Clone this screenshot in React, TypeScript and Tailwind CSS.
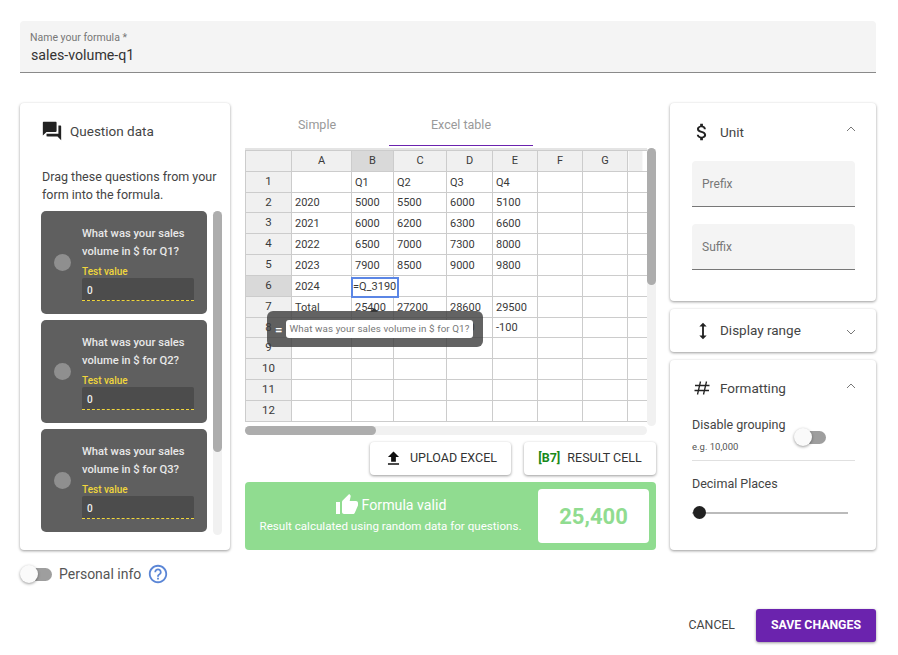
import { MdAttachMoney, MdFileUpload, MdHeight, MdHelpOutline, MdQuestionAnswer, MdThumbUp } from "react-icons/md";

const columns = ["A", "B", "C", "D", "E", "F", "G", ""];

// cada fila con su altura, la tabla original no tiene todas iguales
const rows = [
  { n: 1, h: "h-[21px]", cells: ["", "Q1", "Q2", "Q3", "Q4"] },
  { n: 2, h: "h-[20px]", cells: ["2020", "5000", "5500", "6000", "5100"] },
  { n: 3, h: "h-[21px]", cells: ["2021", "6000", "6200", "6300", "6600"] },
  { n: 4, h: "h-[21px]", cells: ["2022", "6500", "7000", "7300", "8000"] },
  { n: 5, h: "h-[21px]", cells: ["2023", "7900", "8500", "9000", "9800"] },
  { n: 6, h: "h-[21px]", cells: ["2024", "", "", "", ""] },
  { n: 7, h: "h-[21px]", cells: ["Total", "25400", "27200", "28600", "29500"] },
  { n: 8, h: "h-[20px]", cells: ["", "", "", "1800", "-100"] },
  { n: 9, h: "h-[21px]", cells: ["", "", "", "", ""] },
  { n: 10, h: "h-[21px]", cells: ["", "", "", "", ""] },
  { n: 11, h: "h-[21px]", cells: ["", "", "", "", ""] },
  { n: 12, h: "h-[21px]", cells: ["", "", "", "", ""] },
];

const Toggle = () => (
  <div className="relative flex h-[18px] w-8 items-center">
    <div className="ml-[8px] h-[13px] w-6 rounded-full bg-[#9e9e9e]" />
    <div className="absolute left-0 top-0 h-[18px] w-[18px] rounded-full bg-[#fafafa] shadow-[0_1px_3px_rgba(0,0,0,0.4)]" />
  </div>
);

const Chevron = ({ up }: { up: boolean }) => (
  <svg width="12" height="8" viewBox="0 0 12 8" fill="none" stroke="#777" strokeWidth="1">
    <path d={up ? "M2 6 L6 2 L10 6" : "M2 2 L6 6 L10 2"} />
  </svg>
);

const QuestionCard = ({ q }: { q: string }) => (
  <div className="flex h-[103px] w-[166px] shrink-0 items-start rounded-[5px] bg-[#5f5f5f] pl-[13px]">
    <div className="mt-[43px] h-[17px] w-[17px] shrink-0 rounded-full bg-[#8f8f8f]" />
    <div className="ml-[11px] w-[112px] pt-[14px]">
      <p className="text-[11.2px] font-medium leading-[18px] text-[#e8e8e8]">What was your sales volume in $ for {q}?</p>
      <p className="mt-[4px] text-[10px] font-medium leading-[13px] text-[#f0d63c]">Test value</p>
      <div className="flex h-[23px] items-center rounded-t-[2px] border-b border-dashed border-[#f0d63c] bg-[#4c4c4c] pl-[5px] pt-[2px] text-[10px] font-medium text-[#f0f0f0]">0</div>
    </div>
  </div>
);

const Sheet = () => (
  <div className="relative mt-[2px] flex h-[287px] w-[411px] flex-wrap content-start">
    <div className="h-[278px] w-[402px] overflow-hidden border-t-2 border-[#e4e4e4]">
      <table className="w-[420px] table-fixed border-collapse text-[11px] text-[#3a3a3a]">
        <colgroup>
          <col className="w-[46px]" />
          <col className="w-[60px]" />
          <col className="w-[42px]" />
          <col className="w-[53px]" />
          <col className="w-[46px]" />
          <col className="w-[45px]" />
          <col className="w-[45px]" />
          <col className="w-[45px]" />
          <col className="w-[38px]" />
        </colgroup>
        <thead>
          <tr className="h-[21px]">
            <th className="border border-[#cccccc] bg-[#f0f0f0]" />
            {columns.map((c) => (
              <th
                key={c}
                className={`border border-[#cccccc] text-center font-normal ${
                  c === "B" ? "bg-[#d9d9d9]" : c === "" ? "bg-[linear-gradient(90deg,#f0f0f0_14px,#ffffff_14px)]" : "bg-[#f0f0f0]"
                }`}
              >
                {c}
              </th>
            ))}
          </tr>
        </thead>
        <tbody>
          {rows.map((r) => (
            <tr key={r.n} className={r.h}>
              <td className={`border border-[#cccccc] p-0 text-center text-[11.5px] ${r.n === 6 ? "bg-[#d9d9d9]" : "bg-[#f0f0f0]"}`}>{r.n}</td>
              {r.cells.map((v, i) => (
                <td key={i} className="whitespace-nowrap border border-[#cccccc] px-[3px] py-0 leading-none">
                  {r.n === 6 && i === 1 ? (
                    <span className="relative block">
                      <span className="absolute left-[-4px] top-[-9px] h-[21px] w-[48px] border-2 border-[#5b86e5] bg-white leading-[15px]">=Q_3190</span>
                    </span>
                  ) : (
                    v
                  )}
                </td>
              ))}
              <td className="border border-[#cccccc]" />
              <td className="border border-[#cccccc]" />
              <td className="border border-[#cccccc]" />
            </tr>
          ))}
        </tbody>
      </table>
    </div>
    {/* barra vertical */}
    <div className="h-[278px] w-[9px] rounded-full bg-[#f1f1f1]">
      <div className="h-[137px] w-[9px] rounded-full bg-[#adadad]" />
    </div>
    <div className="h-[9px] w-[402px] rounded-full bg-[#f1f1f1]">
      <div className="h-[9px] w-[131px] rounded-full bg-[#adadad]" />
    </div>
    {/* pregunta arrastrada y punta del cursor */}
    <svg className="absolute left-[125px] top-[160px]" width="8" height="4" viewBox="0 0 8 4" fill="#333">
      <path d="M4 0 L8 4 H0 Z" />
    </svg>
    <div className="absolute left-[22px] top-[163px] flex h-[36px] w-[216px] items-center rounded-[6px] bg-[#3c3c3c]/80 pl-[8px]">
      <span className="w-[11px] text-[13px] font-bold leading-none text-white">=</span>
      <span className="flex h-[18px] w-[187px] items-center justify-center rounded-[3px] bg-white text-[9.8px] tracking-[0.1px] text-[#777]">What was your sales volume in $ for Q1?</span>
    </div>
  </div>
);

export default function App() {
  return (
    <div className="h-[655px] w-[898px] overflow-hidden bg-white pl-5 pr-[22px] pt-[21px] font-['Roboto',sans-serif]">
      <div className="flex h-[52px] flex-col rounded-t-[4px] border-b border-[#8a8a8a] bg-[#f4f4f4] pl-[10px] pt-[10px]">
        <span className="text-[10.5px] leading-[13px] text-[#777]">Name your formula *</span>
        <span className="ml-[1px] mt-[2px] text-[14.2px] leading-[18px] text-[#333]">sales-volume-q1</span>
      </div>

      <div className="mt-[30px] flex h-[447px]">
        {/* Question data */}
        <div className="flex w-[210px] shrink-0 flex-col rounded-[4px] bg-white pl-[21px] shadow-[0_1px_3px_rgba(0,0,0,0.4)]">
          <div className="mt-[17px] flex h-[22px] items-center gap-[7px] text-[13.5px] text-[#444]">
            <MdQuestionAnswer className="text-[#222]" size={22} />
            Question data
          </div>
          <p className="ml-[1px] mt-[26px] text-[12.5px] leading-[18px] text-[#444]">Drag these questions from your form into the formula.</p>
          <div className="mt-[7px] flex gap-[6px]">
            <div className="flex flex-col gap-[6px]">
              <QuestionCard q="Q1" />
              <QuestionCard q="Q2" />
              <QuestionCard q="Q3" />
            </div>
            <div className="h-[324px] w-[9px] rounded-full bg-[#f1f1f1]">
              <div className="h-[241px] w-[9px] rounded-full bg-[#adadad]" />
            </div>
          </div>
        </div>

        {/* Tabla */}
        <div className="ml-[15px] flex w-[411px] shrink-0 flex-col">
          <div className="flex h-[43px] text-[12.5px] text-[#999]">
            <div className="flex w-[144px] items-start justify-center pt-[13px]">Simple</div>
            <div className="flex w-[144px] items-start justify-center border-b border-[#6b23ae] pt-[13px]">Excel table</div>
          </div>
          <Sheet />
          <div className="mt-[7px] flex justify-end gap-[13px] text-[12.5px] text-[#333]">
            <div className="flex h-[33px] w-[141px] items-center justify-center gap-[7px] rounded-[4px] bg-white shadow-[0_1px_3px_rgba(0,0,0,0.4)]">
              <MdFileUpload className="text-[#111]" size={19} />
              UPLOAD EXCEL
            </div>
            <div className="flex h-[33px] w-[132px] items-center justify-center gap-[7px] rounded-[4px] bg-white shadow-[0_1px_3px_rgba(0,0,0,0.4)]">
              <span className="font-bold text-[#1a8a1a]">[B7]</span>
              RESULT CELL
            </div>
          </div>
          <div className="mt-[7px] flex h-[68px] items-center rounded-[4px] bg-[#90dc90] pl-[14px] pr-[7px] text-white">
            <div className="flex w-[263px] flex-col items-center pb-[4px]">
              <div className="flex items-center gap-[3px] text-[14.2px] leading-[20px]">
                <MdThumbUp size={24} />
                Formula valid
              </div>
              <p className="text-[11.6px] leading-[18px]">Result calculated using random data for questions.</p>
            </div>
            <div className="ml-auto flex h-[54px] w-[111px] items-center justify-center rounded-[4px] bg-white text-[22px] font-bold text-[#90dc90]">25,400</div>
          </div>
        </div>

        {/* Opciones */}
        <div className="ml-[14px] flex w-[206px] shrink-0 flex-col gap-[8px]">
          <div className="h-[198px] rounded-[4px] bg-white pl-[22px] pr-[21px] shadow-[0_1px_3px_rgba(0,0,0,0.4)]">
            <div className="flex h-[58px] items-center text-[13.5px] text-[#444]">
              <MdAttachMoney className="ml-[-1px] text-[#222]" size={22} />
              <span className="ml-[7px]">Unit</span>
              <span className="mb-[6px] ml-auto mr-[-2px]"><Chevron up /></span>
            </div>
            <div className="flex h-[46px] items-center rounded-t-[4px] border-b border-[#777] bg-[#f4f4f4] pl-[10px] text-[12px] text-[#777]">Prefix</div>
            <div className="mt-[17px] flex h-[46px] items-center rounded-t-[4px] border-b border-[#777] bg-[#f4f4f4] pl-[10px] text-[12px] text-[#777]">Suffix</div>
          </div>
          <div className="flex h-[43px] items-center rounded-[4px] bg-white pl-[22px] pr-[21px] text-[13.5px] text-[#444] shadow-[0_1px_3px_rgba(0,0,0,0.4)]">
            <MdHeight className="text-[#222]" size={22} />
            <span className="ml-[6px]">Display range</span>
            <span className="ml-auto mr-[-2px] mt-[2px]"><Chevron up={false} /></span>
          </div>
          <div className="h-[190px] rounded-[4px] bg-white pl-[22px] pr-[21px] shadow-[0_1px_3px_rgba(0,0,0,0.4)]">
            <div className="flex h-[56px] items-center text-[13.5px] text-[#444]">
              <svg className="ml-[2px]" width="16" height="14" viewBox="0 0 16 14" fill="none" stroke="#222" strokeWidth="1.3">
                <path d="M1 4.5H15.5M0.5 9.5H15M6.5 0.5L3.5 13.5M12.5 0.5L9.5 13.5" />
              </svg>
              <span className="ml-[10px]">Formatting</span>
              <span className="mb-[4px] ml-auto mr-[-2px]"><Chevron up /></span>
            </div>
            <div className="flex h-[45px] items-start border-b border-[#e0e0e0]">
              <div>
                <p className="text-[12.5px] leading-[18px] text-[#444]">Disable grouping</p>
                <p className="mt-[6px] text-[9.5px] leading-[14px] text-[#555]">e.g. 10,000</p>
              </div>
              <div className="ml-[9px] mt-[12px]"><Toggle /></div>
            </div>
            <p className="mt-[14px] text-[12.5px] leading-[18px] text-[#444]">Decimal Places</p>
            <div className="relative mt-[13px] flex h-[13px] items-center">
              <div className="h-[2px] w-[156px] bg-[#bbbbbb]" />
              <div className="absolute left-[1px] top-0 h-[13px] w-[13px] rounded-full bg-[#212121]" />
            </div>
          </div>
        </div>
      </div>

      <div className="mt-[14px] flex h-[20px] items-center gap-[7px] text-[14px] text-[#555]">
        <Toggle />
        Personal info
        <MdHelpOutline className="ml-[-1px] text-[#5b86d6]" size={22} />
      </div>

      <div className="mt-[25px] flex items-center justify-end gap-[21px] text-[12.3px]">
        <span className="pb-[1px] text-[#444]">CANCEL</span>
        <div className="flex h-[33px] w-[120px] items-center justify-center rounded-[3px] bg-[#6b23ae] pb-[1px] font-bold text-white shadow-[0_1px_3px_rgba(0,0,0,0.4)]">SAVE CHANGES</div>
      </div>
    </div>
  );
}
